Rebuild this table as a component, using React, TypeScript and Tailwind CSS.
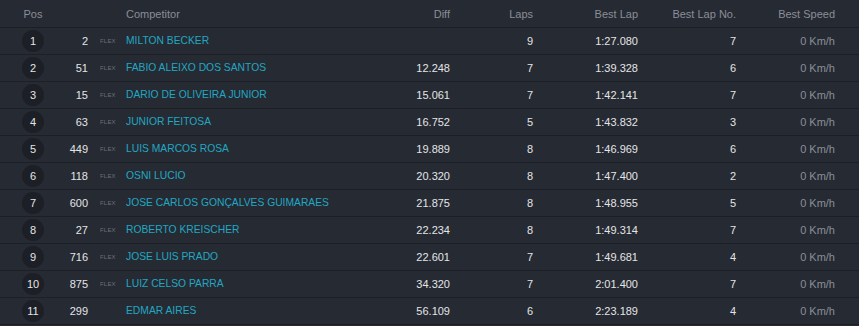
const rows = [
  { pos: 1, num: 2, flex: true, name: 'MILTON BECKER', diff: '', laps: 9, best: '1:27.080', bestNo: 7 },
  { pos: 2, num: 51, flex: true, name: 'FABIO ALEIXO DOS SANTOS', diff: '12.248', laps: 7, best: '1:39.328', bestNo: 6 },
  { pos: 3, num: 15, flex: true, name: 'DARIO DE OLIVEIRA JUNIOR', diff: '15.061', laps: 7, best: '1:42.141', bestNo: 7 },
  { pos: 4, num: 63, flex: true, name: 'JUNIOR FEITOSA', diff: '16.752', laps: 5, best: '1:43.832', bestNo: 3 },
  { pos: 5, num: 449, flex: true, name: 'LUIS MARCOS ROSA', diff: '19.889', laps: 8, best: '1:46.969', bestNo: 6 },
  { pos: 6, num: 118, flex: true, name: 'OSNI LUCIO', diff: '20.320', laps: 8, best: '1:47.400', bestNo: 2 },
  { pos: 7, num: 600, flex: true, name: 'JOSE CARLOS GONÇALVES GUIMARAES', diff: '21.875', laps: 8, best: '1:48.955', bestNo: 5 },
  { pos: 8, num: 27, flex: true, name: 'ROBERTO KREISCHER', diff: '22.234', laps: 8, best: '1:49.314', bestNo: 7 },
  { pos: 9, num: 716, flex: true, name: 'JOSE LUIS PRADO', diff: '22.601', laps: 7, best: '1:49.681', bestNo: 4 },
  { pos: 10, num: 875, flex: true, name: 'LUIZ CELSO PARRA', diff: '34.320', laps: 7, best: '2:01.400', bestNo: 7 },
  { pos: 11, num: 299, flex: false, name: 'EDMAR AIRES', diff: '56.109', laps: 6, best: '2:23.189', bestNo: 4 },
]

const cols = 'grid grid-cols-[66px_22px_38px_1fr_100px_83px_105px_98px_99px] pr-[24px] items-center'

export default function App() {
  return (
    <div className="w-[859px] h-[326px] bg-[#262a33] text-[11px] overflow-hidden" style={{ fontFamily: '"Liberation Sans", Arial, sans-serif' }}>
      <div className={cols + ' h-[28px] pt-[1px] border-b border-[#1c1f25] text-[#8a8e97]'}>
        <div className="text-center">Pos</div>
        <div />
        <div />
        <div>Competitor</div>
        <div className="text-right">Diff</div>
        <div className="text-right">Laps</div>
        <div className="text-right">Best Lap</div>
        <div className="text-right">Best Lap No.</div>
        <div className="text-right">Best Speed</div>
      </div>
      {rows.map((r) => (
        <div key={r.pos} className={cols + ' h-[27px] border-b border-[#1c1f25] text-[#e4e5e7]'}>
          <div className="flex justify-center">
            <span className="w-[22px] h-[22px] rounded-full bg-[#1c1f25] flex items-center justify-center">{r.pos}</span>
          </div>
          <div className="text-right">{r.num}</div>
          <div className="pl-[12px] text-[6px] text-[#6c717a] tracking-[0.2px]">{r.flex ? 'FLEX' : ''}</div>
          <div className="text-[10.3px] text-[#22a7c2] whitespace-nowrap">{r.name}</div>
          <div className="text-right">{r.diff}</div>
          <div className="text-right">{r.laps}</div>
          <div className="text-right">{r.best}</div>
          <div className="text-right">{r.bestNo}</div>
          <div className="text-right text-[#8a8e97]">0 Km/h</div>
        </div>
      ))}
    </div>
  )
}
